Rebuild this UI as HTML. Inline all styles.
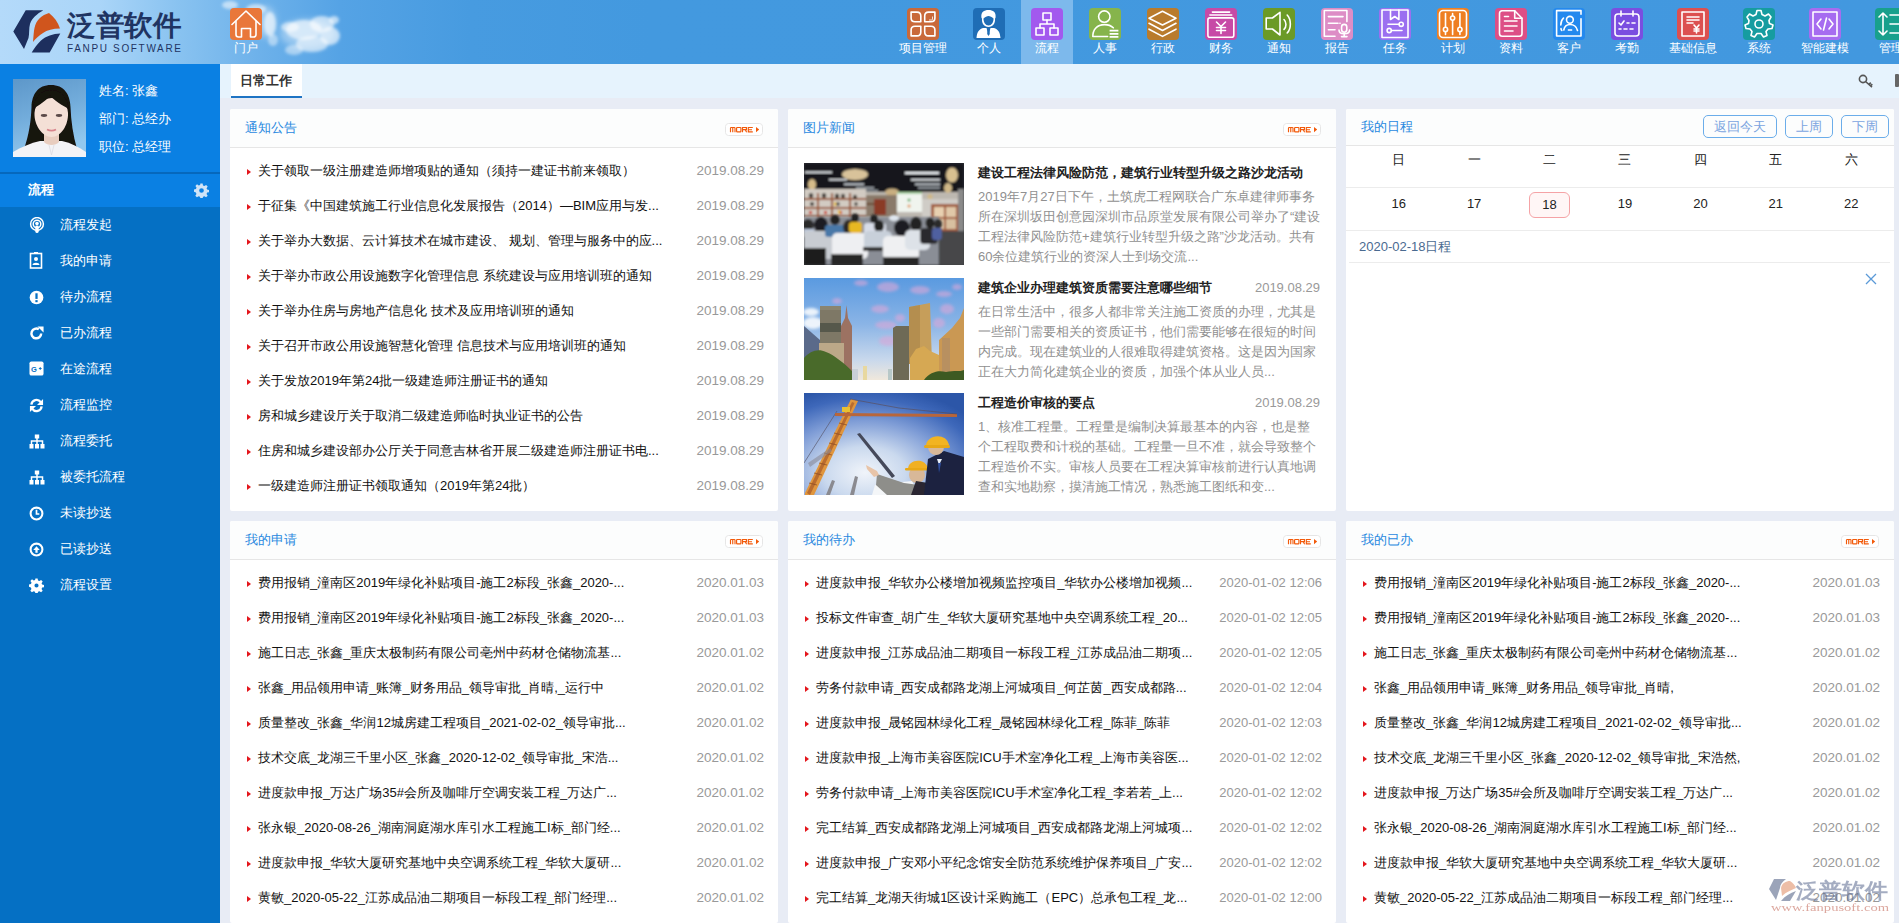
<!DOCTYPE html><html><head><meta charset="utf-8"><title>泛普软件</title><style>
*{box-sizing:border-box;margin:0;padding:0}
html,body{width:1899px;height:923px;overflow:hidden}
body{position:relative;background:#e8ecf5;font-family:"Liberation Sans",sans-serif;font-size:13px;color:#333}
.abs{position:absolute}
#hdr{left:0;top:0;width:1899px;height:64px;background:linear-gradient(90deg,#b4dafa 0,#aad5f8 100px,#88c2f0 180px,#6db1ea 260px,#55a3e5 340px,#479be0 470px,#4399df 650px,#4298df 1899px);overflow:hidden}
.nav{position:absolute;top:0;height:64px;text-align:center;color:#fff;font-size:12px}
.nav .ic{position:absolute;top:8px;width:32px;height:32px;border-radius:4px}
.nav .lb{position:absolute;top:41px;height:14px;line-height:14px;white-space:nowrap;left:0;right:0;text-align:center}
#side{left:0;top:64px;width:220px;height:859px;background:#0570c4}
#prof{left:0;top:0;width:220px;height:108px;background:#0a80e3}
#side .pt{position:absolute;left:99px;color:#fff;font-size:13px;line-height:16px;white-space:nowrap}
#divl{left:0;top:108px;width:220px;height:2px;background:#0668bc}
#lch{left:0;top:110px;width:220px;height:33px;background:#0a80e3;color:#fff;font-weight:bold;line-height:31px;padding-left:28px}
.mi{position:absolute;left:0;width:220px;height:36px;line-height:36px;color:#fff;padding-left:60px;white-space:nowrap}
.mi svg{position:absolute;left:29px;top:11px}
#tabbar{left:220px;top:64px;width:1679px;height:34px;background:#e6f3fd}
#tab{left:231px;top:64px;width:71px;height:34px;background:#fff;border-bottom:2px solid #1f74c4;color:#333;font-size:13px;font-weight:bold;line-height:33px;text-align:center;padding-right:2px}
.pan{position:absolute;background:#fff;border-radius:2px;overflow:hidden}
.ph{position:absolute;left:0;top:0;right:0;height:39px;border-bottom:1px solid #e6e6e6;background:#fcfdfd}
.ph .tt{position:absolute;left:15px;top:0;line-height:38px;color:#2a89e0;font-size:13px}
.more{position:absolute;top:14px;right:15px;width:38px;height:13px;border:1px solid #e8e8e8;border-radius:3px;background:#fff}
.more span{position:absolute;left:4px;top:1px;font-size:8px;line-height:9px;font-weight:bold;color:#f26a10;letter-spacing:0px;font-family:"Liberation Sans",sans-serif}
.more i{position:absolute;right:4px;top:3px;width:0;height:0;border-left:4px solid #f26a10;border-top:3px solid transparent;border-bottom:3px solid transparent}
.row{position:absolute;left:0;right:0;height:35px;line-height:35px;white-space:nowrap}
.row i{position:absolute;left:17px;top:15px;width:0;height:0;border-left:4px solid #e4151b;border-top:3px solid transparent;border-bottom:3px solid transparent}
.row .t{position:absolute;left:28px;top:-1px;color:#111}
.row .d{position:absolute;right:14px;top:-1px;color:#999;font-size:13.5px}
.ni{position:absolute;left:16px;width:516px;height:102px}
.ni .im{position:absolute;left:0;top:0;width:160px;height:102px;overflow:hidden}
.ni .nt{position:absolute;left:174px;top:1px;line-height:18px;font-weight:bold;color:#222;white-space:nowrap}
.ni .nd{position:absolute;right:0;top:1px;line-height:18px;color:#999}
.ni .nx{position:absolute;left:174px;top:24px;width:344px;line-height:20px;color:#909090;height:80px;overflow:hidden;word-break:break-all}
.btn{position:absolute;top:6px;height:23px;border:1px solid #6badea;border-radius:5px;color:#7aa4e0;line-height:21px;text-align:center;font-size:13px}
.wk{position:absolute;width:75.4px;text-align:center;color:#222}
</style></head><body>
<div id="hdr" class="abs">
<svg class="abs" style="left:200px;top:0" width="160" height="64" viewBox="0 0 160 64">
<defs><filter id="cb" x="-50%" y="-50%" width="200%" height="200%"><feGaussianBlur stdDeviation="1.6"/></filter><filter id="cb2" x="-50%" y="-50%" width="200%" height="200%"><feGaussianBlur stdDeviation="3"/></filter></defs>
<g filter="url(#cb2)" fill="#fff">
<ellipse cx="108" cy="34" rx="28" ry="15" opacity=".35"/>
<ellipse cx="66" cy="22" rx="10" ry="16" opacity=".35"/>
</g>
<g filter="url(#cb)" fill="#fff">
<ellipse cx="30" cy="5" rx="8" ry="4" opacity=".55"/>
<ellipse cx="56" cy="9" rx="10" ry="5" opacity=".55"/>
<ellipse cx="70" cy="24" rx="6" ry="12" opacity=".6"/>
<ellipse cx="73" cy="40" rx="5" ry="6" opacity=".45"/>
<ellipse cx="104" cy="30" rx="18" ry="10" opacity=".6"/>
<ellipse cx="122" cy="24" rx="12" ry="8" opacity=".6"/>
<ellipse cx="130" cy="36" rx="10" ry="9" opacity=".6"/>
<ellipse cx="112" cy="44" rx="16" ry="8" opacity=".55"/>
<ellipse cx="90" cy="27" rx="9" ry="5" opacity=".55"/>
<ellipse cx="94" cy="50" rx="9" ry="5" opacity=".45"/>
<ellipse cx="134" cy="20" rx="5" ry="4" opacity=".6"/>
</g></svg>
<svg class="abs" style="left:0;top:0" width="200" height="64" viewBox="0 0 200 64">
<path d="M25.7 10.3 L43.3 10.3 C37 14 32 18 30 24 C28.8 28 29.5 34 28.5 38 L24 49 L13.3 31.4 Z" fill="#1d2f5e"/>
<path d="M33 42 C33.5 36 33.8 31 34.5 28 C36 20 42 15 49 13 C54 17 58 22 60 28.5 C53 28.5 47 30 43 33 C39 35.5 35.5 38.5 33 42 Z" fill="#d0551d"/>
<path d="M31.7 52.5 C34 49 37.5 43.5 41 40.5 C46 36 53 33.8 60.3 33.5 L49.7 52.5 Z" fill="#1d2f5e"/>
<text x="67" y="35" font-family="Liberation Sans, sans-serif" font-size="28" font-weight="600" fill="#1f3462" textLength="114" lengthAdjust="spacingAndGlyphs">泛普软件</text>
<text x="67" y="51.5" font-family="Liberation Sans, sans-serif" font-size="10" fill="#1f3462" textLength="114" lengthAdjust="spacing">FANPU SOFTWARE</text>
</svg>
<div class="nav" style="left:220px;width:52px;"><div class="ic" style="left:10px;background:#e9773a"><svg width="32" height="32" viewBox="0 0 32 32"><path d="M2 16.5 L16 3 L30 16.5" stroke="#fff" stroke-width="1.6" fill="none" stroke-linecap="round" stroke-linejoin="round" stroke-width="2"/><path d="M6 13.5 V26.5 Q6 29 8.5 29 H11.5 V20.5 H20.5 V29 H23.5 Q26 29 26 26.5 V13.5" stroke="#fff" stroke-width="1.6" fill="none" stroke-linecap="round" stroke-linejoin="round" stroke-width="2"/></svg></div><div class="lb">门户</div></div>
<div class="nav" style="left:889px;width:68px;"><div class="ic" style="left:18px;background:#c9693a"><svg width="32" height="32" viewBox="0 0 32 32"><g stroke="#fff" stroke-width="1.6" fill="none" stroke-linecap="round" stroke-linejoin="round" stroke-width="1.9"><path d="M4.1 4.1 H10 Q13.8 4.1 13.8 8 V13.8 H8 Q4.1 13.8 4.1 10 Z"/><path d="M17.7 13.8 V8 Q17.7 4.1 21.5 4.1 H27.9 V10 Q27.9 13.8 24 13.8 Z"/><path d="M4.1 27.9 V22 Q4.1 18.2 8 18.2 H13.8 V24 Q13.8 27.9 10 27.9 Z"/><path d="M17.7 18.2 H24 Q27.9 18.2 27.9 22 V27.9 H21.5 Q17.7 27.9 17.7 24 Z"/></g><path d="M25.5 8.5 V11 Q25.5 12 24.5 12 H22" stroke="#fff" stroke-width=".8" fill="none"/></svg></div><div class="lb">项目管理</div></div>
<div class="nav" style="left:963px;width:52px;"><div class="ic" style="left:10px;background:#1f6db5"><svg width="32" height="32" viewBox="0 0 32 32"><path d="M8.5 10 C7.5 4 11 2 15.5 2 C20 2 23.5 4 22.5 10 L22 10.5 C22.5 15 20 19 15.5 19 C11 19 8.5 15 9 10.5 Z" fill="#fff"/><path d="M10.5 10.5 C12 9 14 8 15.5 8 C17 8 19 9 20.5 10.5 C20.5 14.5 18.5 17.5 15.5 17.5 C12.5 17.5 10.5 14.5 10.5 10.5 Z" fill="#1f6db5"/><path d="M3.5 30 C4 24 6 21.5 10 20 L13.5 20 L15.5 27 L17.5 20 L21 20 C25 21.5 27 24 27.5 30 Z" fill="#fff"/><path d="M14.6 21 L16.4 21 L16.8 26 L15.5 28 L14.2 26 Z" fill="#1f6db5"/></svg></div><div class="lb">个人</div></div>
<div class="nav" style="left:1021px;width:52px;background:#7db9ec;"><div class="ic" style="left:10px;background:#a259ee"><svg width="32" height="32" viewBox="0 0 32 32"><rect x="12" y="5" width="8" height="7" stroke="#fff" stroke-width="1.6" fill="none" stroke-linecap="round" stroke-linejoin="round"/><path d="M16 12 V16 M9 16 H23 M9 16 V20 M23 16 V20" stroke="#fff" stroke-width="1.6" fill="none" stroke-linecap="round" stroke-linejoin="round"/><rect x="5" y="20" width="8" height="7" stroke="#fff" stroke-width="1.6" fill="none" stroke-linecap="round" stroke-linejoin="round"/><rect x="19" y="20" width="8" height="7" stroke="#fff" stroke-width="1.6" fill="none" stroke-linecap="round" stroke-linejoin="round"/></svg></div><div class="lb">流程</div></div>
<div class="nav" style="left:1079px;width:52px;"><div class="ic" style="left:10px;background:#86b44c"><svg width="32" height="32" viewBox="0 0 32 32"><circle cx="15.3" cy="8.6" r="5.7" stroke="#fff" stroke-width="1.6" fill="none" stroke-linecap="round" stroke-linejoin="round" stroke-width="2"/><path d="M24.3 19.8 C22 17.5 19 16.6 15.5 16.6 C8 16.6 3.8 21.5 3.8 28.5 H18.6" stroke="#fff" stroke-width="1.6" fill="none" stroke-linecap="round" stroke-linejoin="round" stroke-width="2" stroke-linecap="butt"/><path d="M20.6 22.7 H29.4 M20.6 25.8 H29.4 M20.6 28.9 H29.4" stroke="#fff" stroke-width="1.7" fill="none"/></svg></div><div class="lb">人事</div></div>
<div class="nav" style="left:1137px;width:52px;"><div class="ic" style="left:10px;background:#b97b2c"><svg width="32" height="32" viewBox="0 0 32 32"><path d="M15.5 3.3 L29 10.2 L15.5 17 L2 10.2 Z" stroke="#fff" stroke-width="1.6" fill="none" stroke-linecap="round" stroke-linejoin="round" stroke-width="1.5"/><path d="M2 15.3 L15.5 22.5 L29 15.3" stroke="#fff" stroke-width="1.6" fill="none" stroke-linecap="round" stroke-linejoin="round" stroke-width="1.5"/><path d="M2 21.2 L15.5 28.4 L29 21.2" stroke="#fff" stroke-width="1.6" fill="none" stroke-linecap="round" stroke-linejoin="round" stroke-width="1.5"/></svg></div><div class="lb">行政</div></div>
<div class="nav" style="left:1195px;width:52px;"><div class="ic" style="left:10px;background:#c74aa6"><svg width="32" height="32" viewBox="0 0 32 32"><path d="M7.4 4.1 H24.6 M4.9 7 H26.7" stroke="#fff" stroke-width="1.6" fill="none" stroke-linecap="round" stroke-linejoin="round" stroke-width="1.7" stroke-linecap="butt"/><rect x="2.9" y="9.9" width="25.9" height="19.3" rx="2" stroke="#fff" stroke-width="1.6" fill="none" stroke-linecap="round" stroke-linejoin="round" stroke-width="1.8"/><path d="M11.5 14 L16 18.5 L20.5 14 M16 18.5 V25.5 M11.5 19.5 H20.5 M11.5 22.5 H20.5" stroke="#fff" stroke-width="1.6" fill="none" stroke-linecap="round" stroke-linejoin="round" stroke-width="1.6"/></svg></div><div class="lb">财务</div></div>
<div class="nav" style="left:1253px;width:52px;"><div class="ic" style="left:10px;background:#6b9a26"><svg width="32" height="32" viewBox="0 0 32 32"><path d="M3.2 10 H9.4 L17 4.3 V27 L9.4 21 H3.2 Z" stroke="#fff" stroke-width="1.6" fill="none" stroke-linecap="round" stroke-linejoin="round" stroke-width="1.6"/><path d="M21 11.5 C23.6 14 23.6 19 21 21.4 M24.2 7 C28.4 11.5 28.4 20.5 24.2 25" stroke="#fff" stroke-width="1.6" fill="none" stroke-linecap="round" stroke-linejoin="round" stroke-width="1.6"/></svg></div><div class="lb">通知</div></div>
<div class="nav" style="left:1311px;width:52px;"><div class="ic" style="left:10px;background:#dd8dc6"><svg width="32" height="32" viewBox="0 0 32 32"><path d="M14 28.3 H3.3 V2.5 H25.9 V13.6" stroke="#fff" stroke-width="1.6" fill="none" stroke-linecap="round" stroke-linejoin="round" stroke-width="1.9" stroke-linecap="butt"/><path d="M7.4 8.6 H22 M7.4 15.2 H17 M7.4 21.8 H14" stroke="#fff" stroke-width="1.6" fill="none" stroke-linecap="round" stroke-linejoin="round" stroke-width="1.6" stroke-linecap="butt"/><path d="M18 15.2 H20" stroke="#fff" stroke-width="1" /><rect x="20.6" y="16.4" width="5.2" height="7.8" rx="2.6" stroke="#fff" stroke-width="1.6" fill="none" stroke-linecap="round" stroke-linejoin="round" stroke-width="1.5"/><path d="M18 22 C18 27 28.6 27 28.6 22 M23.2 26 V28.6 M20.5 28.6 H26" stroke="#fff" stroke-width="1.6" fill="none" stroke-linecap="round" stroke-linejoin="round" stroke-width="1.5"/></svg></div><div class="lb">报告</div></div>
<div class="nav" style="left:1369px;width:52px;"><div class="ic" style="left:10px;background:#9b6ff0"><svg width="32" height="32" viewBox="0 0 32 32"><rect x="3" y="2" width="26" height="27.5" stroke="#fff" stroke-width="1.6" fill="none" stroke-linecap="round" stroke-linejoin="round" stroke-width="1.9"/><path d="M11.5 2 V11.5 L15.7 8.5 L19.9 11.5 V2" stroke="#fff" stroke-width="1.6" fill="none" stroke-linecap="round" stroke-linejoin="round" stroke-width="1.6"/><path d="M9 16.3 H20 M12.5 22.5 H23" stroke="#fff" stroke-width="1.6" fill="none" stroke-linecap="round" stroke-linejoin="round" stroke-width="1.5"/><circle cx="22.2" cy="16.3" r="2.1" stroke="#fff" stroke-width="1.6" fill="none" stroke-linecap="round" stroke-linejoin="round" stroke-width="1.5"/><circle cx="10.2" cy="22.5" r="2.1" stroke="#fff" stroke-width="1.6" fill="none" stroke-linecap="round" stroke-linejoin="round" stroke-width="1.5"/></svg></div><div class="lb">任务</div></div>
<div class="nav" style="left:1427px;width:52px;"><div class="ic" style="left:10px;background:#ee7f22"><svg width="32" height="32" viewBox="0 0 32 32"><rect x="2.5" y="2.5" width="27" height="27" rx="3.5" stroke="#fff" stroke-width="1.6" fill="none" stroke-linecap="round" stroke-linejoin="round" stroke-width="1.8"/><path d="M8.5 5.6 V26.5 M15.6 5.6 V26.5 M22.9 5.6 V26.5" stroke="#fff" stroke-width="1.6" fill="none" stroke-linecap="round" stroke-linejoin="round" stroke-width="1.5"/><circle cx="8.5" cy="21.4" r="2.1" fill="#ef7e22" stroke="#fff" stroke-width="1.6" fill="none" stroke-linecap="round" stroke-linejoin="round" stroke-width="1.5"/><circle cx="15.6" cy="10.1" r="2.1" fill="#ef7e22" stroke="#fff" stroke-width="1.6" fill="none" stroke-linecap="round" stroke-linejoin="round" stroke-width="1.5"/><circle cx="22.9" cy="21.4" r="2.1" fill="#ef7e22" stroke="#fff" stroke-width="1.6" fill="none" stroke-linecap="round" stroke-linejoin="round" stroke-width="1.5"/></svg></div><div class="lb">计划</div></div>
<div class="nav" style="left:1485px;width:52px;"><div class="ic" style="left:10px;background:#dd4f86"><svg width="32" height="32" viewBox="0 0 32 32"><path d="M6.5 2.8 H19.7 L27 10.2 V25.5 Q27 28.2 24.3 28.2 H7.2 Q4.5 28.2 4.5 25.5 V5.5 Q4.5 2.8 7.2 2.8" stroke="#fff" stroke-width="1.6" fill="none" stroke-linecap="round" stroke-linejoin="round" stroke-width="1.8"/><path d="M19.7 2.8 V10.2 H27" stroke="#fff" stroke-width="1.6" fill="none" stroke-linecap="round" stroke-linejoin="round" stroke-width="1.5"/><path d="M9.5 8.5 H13.5 M9.5 13 H22 M9.5 18 H22 M9.5 23 H18" stroke="#fff" stroke-width="1.6" fill="none" stroke-linecap="round" stroke-linejoin="round" stroke-width="1.5" stroke-linecap="butt"/></svg></div><div class="lb">资料</div></div>
<div class="nav" style="left:1543px;width:52px;"><div class="ic" style="left:10px;background:#2489ee"><svg width="32" height="32" viewBox="0 0 32 32"><path d="M28 6.2 V2.6 H3.6 V28 H28 V10.7" stroke="#fff" stroke-width="1.6" fill="none" stroke-linecap="round" stroke-linejoin="round" stroke-width="1.8" stroke-linecap="butt"/><circle cx="16.9" cy="11.8" r="3.4" stroke="#fff" stroke-width="1.6" fill="none" stroke-linecap="round" stroke-linejoin="round" stroke-width="1.5"/><path d="M10.8 22 C11.5 18 14 16.5 17 16.5 C20.5 16.5 23.5 18.5 24.5 22.5 M10.5 10 C8.5 12 7.8 14.5 7.8 17 M8 20.5 C8 21.5 8.3 22 8.8 22.5" stroke="#fff" stroke-width="1.6" fill="none" stroke-linecap="round" stroke-linejoin="round" stroke-width="1.5"/><path d="M14.8 22 H19.2" stroke="#fff" stroke-width="1.5"/></svg></div><div class="lb">客户</div></div>
<div class="nav" style="left:1601px;width:52px;"><div class="ic" style="left:10px;background:#7a4ee0"><svg width="32" height="32" viewBox="0 0 32 32"><rect x="4" y="6" width="24" height="22" rx="3" stroke="#fff" stroke-width="1.6" fill="none" stroke-linecap="round" stroke-linejoin="round" stroke-width="1.8"/><path d="M10 3 V8 M22 3 V8" stroke="#fff" stroke-width="1.6" fill="none" stroke-linecap="round" stroke-linejoin="round"/><path d="M8 15 L10 17 L13 13 M16 15 H18 M21 15 H24 M8 21 H10 M13 21 H16 M19 21 H22" stroke="#fff" stroke-width="1.6" fill="none" stroke-linecap="round" stroke-linejoin="round"/></svg></div><div class="lb">考勤</div></div>
<div class="nav" style="left:1659px;width:68px;"><div class="ic" style="left:18px;background:#dc5050"><svg width="32" height="32" viewBox="0 0 32 32"><rect x="5" y="4" width="22" height="24" stroke="#fff" stroke-width="1.6" fill="none" stroke-linecap="round" stroke-linejoin="round" stroke-width="1.8"/><path d="M10 9 H22 M10 12 H22 M10 15 H16" stroke="#fff" stroke-width="1.6" fill="none" stroke-linecap="round" stroke-linejoin="round"/><path d="M17 17 L19.5 20 L22 17 M19.5 20 V25 M17 21 H22 M17 23 H22" stroke="#fff" stroke-width="1.6" fill="none" stroke-linecap="round" stroke-linejoin="round"/></svg></div><div class="lb">基础信息</div></div>
<div class="nav" style="left:1733px;width:52px;"><div class="ic" style="left:10px;background:#169ca0"><svg width="32" height="32" viewBox="0 0 32 32"><path d="M14 4 H18 L19 8 L22 9.5 L25.5 7.5 L28 10.5 L26 14 L26.5 17 L30 18.5 L29 22 L25 22.5 L23 25 L24 29 L20.5 30.5 L18 27 H14 L11.5 30.5 L8 29 L9 25 L7 22.5 L3 22 L2 18.5 L5.5 17 L6 14 L4 10.5 L6.5 7.5 L10 9.5 L13 8 Z" stroke="#fff" stroke-width="1.6" fill="none" stroke-linecap="round" stroke-linejoin="round" stroke-width="1.8" transform="translate(0,-1.5)"/><circle cx="16" cy="16" r="4" stroke="#fff" stroke-width="1.6" fill="none" stroke-linecap="round" stroke-linejoin="round" stroke-width="1.8"/></svg></div><div class="lb">系统</div></div>
<div class="nav" style="left:1791px;width:68px;"><div class="ic" style="left:18px;background:#a66cf0"><svg width="32" height="32" viewBox="0 0 32 32"><rect x="4" y="4" width="24" height="24" stroke="#fff" stroke-width="1.6" fill="none" stroke-linecap="round" stroke-linejoin="round" stroke-width="1.8"/><path d="M12 11 L8 16 L12 21 M20 11 L24 16 L20 21 M17.5 10 L14.5 22" stroke="#fff" stroke-width="1.6" fill="none" stroke-linecap="round" stroke-linejoin="round"/></svg></div><div class="lb">智能建模</div></div>
<div class="nav" style="left:1865px;width:52px;"><div class="ic" style="left:10px;background:#18a08c"><svg width="32" height="32" viewBox="0 0 32 32"><path d="M8 5 V27 M4 9 L8 5 L12 9 M4 23 L8 27 L12 23 M15 7 H29 M15 16 H29 M15 25 H29" stroke="#fff" stroke-width="1.6" fill="none" stroke-linecap="round" stroke-linejoin="round" stroke-width="2.2"/></svg></div><div class="lb">管理</div></div>
</div>
<div id="side" class="abs">
<div id="prof" class="abs">
<svg class="abs" style="left:13px;top:15px" width="73" height="78" viewBox="0 0 73 78">
<defs><linearGradient id="pbg" x1="0" y1="0" x2="0.3" y2="1"><stop offset="0" stop-color="#5d97c9"/><stop offset=".5" stop-color="#72acdb"/><stop offset="1" stop-color="#92c8ee"/></linearGradient>
<filter id="pbl" x="-10%" y="-10%" width="120%" height="120%"><feGaussianBlur stdDeviation=".7"/></filter></defs>
<rect width="73" height="78" fill="url(#pbg)"/>
<g filter="url(#pbl)">
<path d="M38 6 C25 6 19 15 18.5 28 C18 42 16 56 11 70 L28 67 L48 67 L64 70 C60 56 58 42 57.5 28 C57 15 51 6 38 6 Z" fill="#17120f"/>
<path d="M0 78 V73 C8 68 18 64 27 62 L49 62 C58 64 66 68 73 73 V78 Z" fill="#f3f3f6"/>
<path d="M31 52 V63 C34 67 43 67 46 63 V52 Z" fill="#e8cdbf"/>
<path d="M38.5 19 C30 20 22 24 21.5 34 C21 46 29 58 38.5 58 C48 58 55.5 46 55 34 C54.5 24 47 20 38.5 19 Z" fill="#f4e0d6"/>
<path d="M38 11 C29 11 22 17 20 30 C26 26 33 22 37.5 16 C41 22 49 26 56 30 C54 17 47 11 38 11 Z" fill="#17120f"/>
<ellipse cx="31" cy="36.5" rx="3.2" ry="1.4" fill="#5a4a48"/><ellipse cx="46" cy="36.5" rx="3.2" ry="1.4" fill="#5a4a48"/>
<path d="M34 50.5 C37 52 40 52 43 50.5" stroke="#d8848c" stroke-width="1.8" fill="none"/>
<path d="M36 66 L38.5 76 L41 66" stroke="#dcdce2" stroke-width=".8" fill="none"/>
</g></svg>
<div class="pt" style="top:19px">姓名: 张鑫</div>
<div class="pt" style="top:47px">部门: 总经办</div>
<div class="pt" style="top:75px">职位: 总经理</div>
</div>
<div id="divl" class="abs"></div>
<div id="lch" class="abs">流程<svg class="abs" style="left:194px;top:9px" width="15" height="15" viewBox="0 0 16 16"><path fill="#cfe3f7" d="M6.8 0.5h2.4l.4 2.1 1.5.6 1.8-1.2 1.7 1.7-1.2 1.8.6 1.5 2.1.4v2.4l-2.1.4-.6 1.5 1.2 1.8-1.7 1.7-1.8-1.2-1.5.6-.4 2.1H6.8l-.4-2.1-1.5-.6-1.8 1.2-1.7-1.7 1.2-1.8-.6-1.5L0 9.2V6.8l2.1-.4.6-1.5-1.2-1.8 1.7-1.7 1.8 1.2 1.5-.6z M8 5.5a2.5 2.5 0 1 0 0 5 2.5 2.5 0 1 0 0-5z" fill-rule="evenodd"/></svg></div>
<div class="mi" style="top:143px"><svg width="16" height="16" viewBox="0 0 16 16" style="top:10px;left:29px"><circle cx="8" cy="7" r="6.4" fill="none" stroke="#fff" stroke-width="1.5"/><circle cx="8" cy="7" r="3.8" fill="none" stroke="#fff" stroke-width="1.5"/><circle cx="8" cy="6.5" r="1.8" fill="#fff"/><rect x="6.3" y="8.5" width="3.4" height="7.5" rx="1.4" fill="#fff"/></svg>流程发起</div>
<div class="mi" style="top:179px"><svg width="14" height="17" viewBox="0 0 14 17" style="top:9px"><rect x="1.5" y="1.5" width="11" height="14.5" fill="none" stroke="#fff" stroke-width="1.6"/><circle cx="7" cy="7" r="2" fill="#fff"/><path d="M3.5 13 C3.5 10 10.5 10 10.5 13 Z" fill="#fff"/><rect x="5" y="0" width="4" height="2" fill="#fff"/></svg>我的申请</div>
<div class="mi" style="top:215px"><svg width="15" height="15" viewBox="0 0 16 16"><circle cx="8" cy="8" r="7.3" fill="#fff"/><rect x="6.8" y="3.5" width="2.4" height="6" fill="#0570c4"/><rect x="6.8" y="10.8" width="2.4" height="2.2" fill="#0570c4"/></svg>待办流程</div>
<div class="mi" style="top:251px"><svg width="15" height="15" viewBox="0 0 16 16"><path d="M13 8 A5.2 5.2 0 1 1 10.5 3.5" fill="none" stroke="#fff" stroke-width="2.6"/><path d="M9 0.5 L15.5 0.5 L15.5 7 Z" fill="#fff"/></svg>已办流程</div>
<div class="mi" style="top:287px"><svg width="15" height="15" viewBox="0 0 16 16" style="top:10px"><rect x="0.5" y="0.5" width="15" height="15" rx="2" fill="#fff"/><text x="2.2" y="11.5" font-size="8" font-weight="bold" font-family="Liberation Sans, sans-serif" fill="#0570c4">G</text><path d="M10.5 8 h3 M12 6.5 v3" stroke="#0570c4" stroke-width="1"/></svg>在途流程</div>
<div class="mi" style="top:323px"><svg width="15" height="15" viewBox="0 0 16 16"><path d="M2.5 7 A5.5 5.5 0 0 1 12.5 4.5" fill="none" stroke="#fff" stroke-width="2.4"/><path d="M15 1 V7.5 H8.5 Z" fill="#fff"/><path d="M13.5 9 A5.5 5.5 0 0 1 3.5 11.5" fill="none" stroke="#fff" stroke-width="2.4"/><path d="M1 15 V8.5 H7.5 Z" fill="#fff"/></svg>流程监控</div>
<div class="mi" style="top:359px"><svg width="16" height="15" viewBox="0 0 16 15"><rect x="5.8" y="0.5" width="4.4" height="4" fill="#fff"/><path d="M8 4 V7 M2.5 10 V7 H13.5 V10 M8 7 V10" stroke="#fff" stroke-width="1.5" fill="none"/><rect x="0.5" y="10" width="4" height="4.5" fill="#fff"/><rect x="6" y="10" width="4" height="4.5" fill="#fff"/><rect x="11.5" y="10" width="4" height="4.5" fill="#fff"/></svg>流程委托</div>
<div class="mi" style="top:395px"><svg width="16" height="15" viewBox="0 0 16 15"><rect x="5.8" y="0.5" width="4.4" height="4" fill="#fff"/><path d="M8 4 V7 M2.5 10 V7 H13.5 V10 M8 7 V10" stroke="#fff" stroke-width="1.5" fill="none"/><rect x="0.5" y="10" width="4" height="4.5" fill="#fff"/><rect x="6" y="10" width="4" height="4.5" fill="#fff"/><rect x="11.5" y="10" width="4" height="4.5" fill="#fff"/></svg>被委托流程</div>
<div class="mi" style="top:431px"><svg width="15" height="15" viewBox="0 0 16 16"><circle cx="8" cy="8" r="6.3" fill="none" stroke="#fff" stroke-width="2.2"/><path d="M8 4 V8.5 H11" fill="none" stroke="#fff" stroke-width="1.8"/></svg>未读抄送</div>
<div class="mi" style="top:467px"><svg width="15" height="15" viewBox="0 0 16 16"><circle cx="8" cy="8" r="6.3" fill="none" stroke="#fff" stroke-width="2.2"/><path d="M4.5 8.5 L8 4.5 L11.5 8.5 Z" fill="#fff"/><rect x="6.8" y="7.5" width="2.4" height="4" fill="#fff"/></svg>已读抄送</div>
<div class="mi" style="top:503px"><svg width="15" height="15" viewBox="0 0 16 16"><path fill="#fff" fill-rule="evenodd" d="M6.8 0.5h2.4l.4 2.1 1.5.6 1.8-1.2 1.7 1.7-1.2 1.8.6 1.5 2.1.4v2.4l-2.1.4-.6 1.5 1.2 1.8-1.7 1.7-1.8-1.2-1.5.6-.4 2.1H6.8l-.4-2.1-1.5-.6-1.8 1.2-1.7-1.7 1.2-1.8-.6-1.5L0 9.2V6.8l2.1-.4.6-1.5-1.2-1.8 1.7-1.7 1.8 1.2 1.5-.6z M8 5.8a2.2 2.2 0 1 0 0 4.4 2.2 2.2 0 1 0 0-4.4z"/></svg>流程设置</div>
</div>
<div id="tabbar" class="abs"></div>
<div id="tab" class="abs">日常工作</div>
<svg class="abs" style="left:1858px;top:74px" width="16" height="14" viewBox="0 0 16 14"><circle cx="5" cy="5" r="3.6" fill="none" stroke="#555" stroke-width="1.6"/><path d="M7.5 7.5 L14 13.2 M11 10.3 L12.8 8.6 M12.6 11.8 L14.3 10.2" stroke="#555" stroke-width="1.6" fill="none"/></svg>
<div class="abs" style="left:1895px;top:74px;width:4px;height:13px;background:#666;border-radius:1px"></div>
<div class="pan" style="left:230px;top:109px;width:548px;height:402px">
<div class="ph"><div class="tt">通知公告</div><svg class="more" width="38" height="13" viewBox="0 0 38 13" style="border:none;background:none"><rect x="0.5" y="0.5" width="37" height="12" rx="3" fill="#fff" stroke="#e6e6e6"/><g transform="translate(5,4)" stroke="#f25a0a" stroke-width="1.15" fill="none"><path d="M0.5 5.2 V1.2 Q0.5 0.5 1.2 0.5 H4.3 Q5 0.5 5 1.2 V5.2 M2.75 0.5 V5.2"/><rect x="6.6" y="0.5" width="4.3" height="4.4" rx="0.6"/><path d="M12.5 5.2 V0.5 H16.4 V2.6 H12.5 M15.2 2.6 L16.6 5.2"/><path d="M22.8 0.5 H18.3 V4.9 H22.8 M18.3 2.7 H22"/></g><path d="M31 4 L34.2 6.6 L31 9.2 Z" fill="#f25a0a"/></svg></div>
<div class="row" style="top:45px"><i></i><span class="t">关于领取一级注册建造师增项贴的通知（须持一建证书前来领取）</span><span class="d">2019.08.29</span></div>
<div class="row" style="top:80px"><i></i><span class="t">于征集《中国建筑施工行业信息化发展报告（2014）—BIM应用与发...</span><span class="d">2019.08.29</span></div>
<div class="row" style="top:115px"><i></i><span class="t">关于举办大数据、云计算技术在城市建设、 规划、管理与服务中的应...</span><span class="d">2019.08.29</span></div>
<div class="row" style="top:150px"><i></i><span class="t">关于举办市政公用设施数字化管理信息 系统建设与应用培训班的通知</span><span class="d">2019.08.29</span></div>
<div class="row" style="top:185px"><i></i><span class="t">关于举办住房与房地产信息化 技术及应用培训班的通知</span><span class="d">2019.08.29</span></div>
<div class="row" style="top:220px"><i></i><span class="t">关于召开市政公用设施智慧化管理 信息技术与应用培训班的通知</span><span class="d">2019.08.29</span></div>
<div class="row" style="top:255px"><i></i><span class="t">关于发放2019年第24批一级建造师注册证书的通知</span><span class="d">2019.08.29</span></div>
<div class="row" style="top:290px"><i></i><span class="t">房和城乡建设厅关于取消二级建造师临时执业证书的公告</span><span class="d">2019.08.29</span></div>
<div class="row" style="top:325px"><i></i><span class="t">住房和城乡建设部办公厅关于同意吉林省开展二级建造师注册证书电...</span><span class="d">2019.08.29</span></div>
<div class="row" style="top:360px"><i></i><span class="t">一级建造师注册证书领取通知（2019年第24批）</span><span class="d">2019.08.29</span></div>
</div>
<div class="pan" style="left:788px;top:109px;width:548px;height:402px">
<div class="ph"><div class="tt">图片新闻</div><svg class="more" width="38" height="13" viewBox="0 0 38 13" style="border:none;background:none"><rect x="0.5" y="0.5" width="37" height="12" rx="3" fill="#fff" stroke="#e6e6e6"/><g transform="translate(5,4)" stroke="#f25a0a" stroke-width="1.15" fill="none"><path d="M0.5 5.2 V1.2 Q0.5 0.5 1.2 0.5 H4.3 Q5 0.5 5 1.2 V5.2 M2.75 0.5 V5.2"/><rect x="6.6" y="0.5" width="4.3" height="4.4" rx="0.6"/><path d="M12.5 5.2 V0.5 H16.4 V2.6 H12.5 M15.2 2.6 L16.6 5.2"/><path d="M22.8 0.5 H18.3 V4.9 H22.8 M18.3 2.7 H22"/></g><path d="M31 4 L34.2 6.6 L31 9.2 Z" fill="#f25a0a"/></svg></div>
<div class="ni" style="top:54px"><div class="im"><svg width="160" height="102" viewBox="0 0 160 102"><defs><filter id="b1" x="-5%" y="-5%" width="110%" height="110%"><feGaussianBlur stdDeviation=".9"/></filter></defs>
<rect width="160" height="102" fill="#3a3c40"/>
<g filter="url(#b1)">
<rect x="0" y="24" width="160" height="50" fill="#bdb8b0"/>
<rect x="0" y="0" width="160" height="29" fill="#15181e"/>
<rect x="1" y="8.5" width="27" height="1.6" fill="#f4f8fc"/><rect x="25" y="16" width="18" height="1.4" fill="#eef2f6"/><rect x="40" y="20.5" width="20" height="1.4" fill="#e8eef4"/><rect x="52" y="24.3" width="18" height="1.2" fill="#dde4ec"/><rect x="60" y="27.2" width="14" height="1" fill="#c8d0d8"/>
<rect x="101" y="9" width="34" height="2" fill="#f4f8fc"/><rect x="107" y="16" width="29" height="1.6" fill="#eef2f6"/><rect x="111" y="20.5" width="25" height="1.4" fill="#e4eaf0"/><rect x="114" y="24.3" width="22" height="1.2" fill="#d8dee6"/>
<ellipse cx="51" cy="11.5" rx="13" ry="5.5" fill="#d8c29a"/><ellipse cx="8" cy="21.5" rx="4" ry="5.5" fill="#d6bc8a"/><ellipse cx="148" cy="12" rx="6" ry="7.5" fill="#d8c090"/><ellipse cx="144" cy="25" rx="4" ry="5" fill="#d0b888"/><ellipse cx="88" cy="29" rx="7" ry="3.5" fill="#c8ae80"/>
<ellipse cx="42" cy="31" rx="3" ry="4" fill="#d8c090"/><ellipse cx="62" cy="36" rx="2.2" ry="3" fill="#d8c090"/><ellipse cx="126" cy="34" rx="2.5" ry="3" fill="#d0b888"/>
<rect x="0" y="26" width="62" height="30" fill="#d2cbc2"/>
<rect x="0" y="35" width="62" height="2" fill="#9a5632"/><rect x="0" y="44" width="62" height="2" fill="#9a5632"/><rect x="0" y="52" width="62" height="2" fill="#8a4a2c"/>
<rect x="13" y="30" width="2" height="26" fill="#9a5632"/><rect x="27" y="30" width="2" height="26" fill="#9a5632"/><rect x="45" y="30" width="2" height="26" fill="#9a5632"/>
<g fill="#3a3630"><ellipse cx="7" cy="32.5" rx="2.2" ry="2.5"/><ellipse cx="20" cy="32.5" rx="2.2" ry="2.5"/><ellipse cx="33" cy="33" rx="2.2" ry="2.5"/><ellipse cx="39" cy="33" rx="2" ry="2.3"/><ellipse cx="51" cy="34" rx="2" ry="2.2"/><ellipse cx="8" cy="41" rx="2" ry="2"/><ellipse cx="34" cy="41" rx="1.6" ry="2"/><ellipse cx="52" cy="41" rx="1.6" ry="2"/></g>
<g fill="#c83a28"><rect x="5" y="48" width="3" height="3"/><rect x="20" y="48" width="3" height="3"/><rect x="36" y="48" width="2" height="3"/></g>
<g fill="#e8c030"><rect x="30" y="39" width="2" height="4"/><rect x="34" y="47" width="2" height="4"/></g>
<rect x="62" y="32" width="31" height="22" fill="#8a7a6a"/><rect x="70" y="36" width="12" height="16" fill="#8a3a28"/><rect x="62" y="40" width="8" height="2" fill="#6a4a30"/>
<rect x="93" y="29" width="25" height="20" fill="#f0f4ee"/><rect x="93" y="29" width="25" height="2" fill="#a8d0a0"/><circle cx="105" cy="37" r="1.5" fill="#5aa860"/><circle cx="105" cy="43" r="1.5" fill="#e09050"/>
<rect x="118" y="36" width="37" height="34" fill="#cfccc6"/>
<rect x="127" y="41" width="28" height="28" fill="#a05a3a"/><rect x="130" y="44" width="10" height="10" fill="#e8d0b0"/><rect x="142" y="44" width="10" height="10" fill="#e0c8a8"/><rect x="130" y="56" width="10" height="10" fill="#e0c8a8"/><rect x="142" y="56" width="10" height="10" fill="#d8c0a0"/>
<rect x="154" y="26" width="6" height="50" fill="#8a8a8a"/>
<rect x="135" y="68" width="25" height="34" fill="#46464a"/>
</g>
<g filter="url(#b1)">
<rect x="0" y="54" width="135" height="48" fill="#8a8e96"/>
<ellipse cx="4" cy="62" rx="6" ry="6" fill="#2a2a2a"/><rect x="0" y="66" width="10" height="10" fill="#bcc8dc"/>
<ellipse cx="17" cy="62" rx="7" ry="8" fill="#1e1e20"/><rect x="0" y="68" width="30" height="28" rx="4" fill="#c8ccd2"/>
<ellipse cx="31" cy="57" rx="5" ry="5" fill="#222"/><rect x="21" y="62" width="21" height="12" rx="3" fill="#4a78a8"/>
<ellipse cx="45" cy="64" rx="6" ry="7.5" fill="#2e2a26"/><rect x="28" y="70" width="36" height="26" rx="5" fill="#eeeff2"/>
<ellipse cx="51" cy="55" rx="4" ry="4.5" fill="#222"/><rect x="45" y="59" width="13" height="11" rx="3" fill="#e8b820"/>
<ellipse cx="70" cy="56" rx="4" ry="4.5" fill="#222"/><rect x="60" y="60" width="22" height="12" rx="3" fill="#d8dde8"/>
<ellipse cx="75" cy="63" rx="5" ry="6" fill="#222"/><rect x="60" y="68" width="28" height="20" rx="5" fill="#c8d0da"/>
<ellipse cx="98" cy="65" rx="8" ry="8.5" fill="#1e1e20"/><rect x="79" y="73" width="36" height="24" rx="5" fill="#eff0f2"/>
<ellipse cx="90" cy="55" rx="5" ry="3" fill="#dfe6ee"/>
<ellipse cx="112" cy="61" rx="6" ry="7" fill="#222"/><rect x="101" y="67" width="25" height="20" rx="5" fill="#dde2e8"/>
<ellipse cx="126" cy="60" rx="4.5" ry="5.5" fill="#222"/><rect x="116" y="65" width="18" height="16" rx="4" fill="#2a2a2e"/>
<ellipse cx="134" cy="61" rx="4" ry="5" fill="#2a2a2a"/><rect x="128" y="65" width="10" height="12" rx="3" fill="#5060a0"/>
<rect x="0" y="85" width="22" height="17" fill="#1e1e1e"/><rect x="27" y="91" width="32" height="11" fill="#262626"/><rect x="79" y="94" width="36" height="8" fill="#262626"/>
<rect x="59" y="84" width="20" height="4" fill="#2a2a2a"/>
</g></svg></div><div class="nt">建设工程法律风险防范，建筑行业转型升级之路沙龙活动</div><div class="nx">2019年7月27日下午，土筑虎工程网联合广东卓建律师事务所在深圳坂田创意园深圳市品原堂发展有限公司举办了“建设工程法律风险防范+建筑行业转型升级之路”沙龙活动。共有60余位建筑行业的资深人士到场交流...</div></div>
<div class="ni" style="top:169px"><div class="im"><svg width="160" height="102" viewBox="0 0 160 102"><defs><linearGradient id="sk" x1="0" y1="0" x2="0" y2="1"><stop offset="0" stop-color="#5a9ae0"/><stop offset=".45" stop-color="#8ab4e6"/><stop offset=".8" stop-color="#c8d8ec"/><stop offset="1" stop-color="#f0e8dc"/></linearGradient><filter id="b2" x="-5%" y="-5%" width="110%" height="110%"><feGaussianBlur stdDeviation=".7"/></filter><filter id="b2c" x="-50%" y="-50%" width="200%" height="200%"><feGaussianBlur stdDeviation="1.8"/></filter></defs>
<rect width="160" height="102" fill="url(#sk)"/>
<g filter="url(#b2c)" fill="#dca8d8" opacity=".6"><ellipse cx="84" cy="9" rx="11" ry="5"/><ellipse cx="57" cy="5" rx="7" ry="3"/><ellipse cx="76" cy="31" rx="9" ry="4"/><ellipse cx="140" cy="16" rx="8" ry="3"/><ellipse cx="116" cy="12" rx="10" ry="4"/><ellipse cx="82" cy="47" rx="11" ry="4"/><ellipse cx="153" cy="9" rx="5" ry="3"/><ellipse cx="143" cy="31" rx="7" ry="5"/><ellipse cx="135" cy="45" rx="6" ry="5"/><ellipse cx="84" cy="63" rx="9" ry="5"/><ellipse cx="33" cy="23" rx="5" ry="3"/><ellipse cx="96" cy="40" rx="5" ry="4"/></g>
<g filter="url(#b2c)" fill="#fff" opacity=".85"><ellipse cx="7" cy="34" rx="8" ry="4"/><ellipse cx="9" cy="45" rx="10" ry="6"/></g>
<g filter="url(#b2)">
<rect x="16" y="28" width="21" height="50" rx="2" fill="#7e7866"/><rect x="16" y="45" width="21" height="9" fill="#56594c"/><rect x="16" y="28" width="21" height="4" fill="#8a8470"/>
<path d="M37 102 V48 L41 40 L42.5 27 L44 40 L48 48 V102 Z" fill="#9c7262"/>
<path d="M0 48 L8 55 L16 62 V102 H0 Z" fill="#5a6a8a"/>
<rect x="15" y="65" width="25" height="37" fill="#bca888"/>
<path d="M89 50 L92 48 H105 V102 H89 Z" fill="#6e6a56"/>
<path d="M105 29 L126 25 L128 86 H105 Z" fill="#c69e5a"/><path d="M105 29 L116 27 V86 H105 Z" fill="#a88448" opacity=".6"/>
<path d="M106 80 L112 71 L120 68 L126 73 L135 77 V102 H106 Z" fill="#d6a852"/>
<path d="M135 62 L148 50 L156 40 L160 30 V102 H135 Z" fill="#ca9852"/><rect x="138" y="60" width="8" height="42" fill="#b89060"/>
<rect x="59" y="88" width="4" height="14" fill="#e8d8a0"/><rect x="48" y="91" width="6" height="11" fill="#c8d0d8"/><rect x="84" y="91" width="4" height="11" fill="#b8c8c8"/>
<path d="M0 102 V80 C6 73 14 70 22 74 C30 77 40 85 48 93 V102 Z" fill="#4a6a2c"/>
<path d="M120 102 C126 94 134 92 142 94 C150 92 156 94 160 92 V102 Z" fill="#3e5a24"/>
</g></svg></div><div class="nt">建筑企业办理建筑资质需要注意哪些细节</div><div class="nd">2019.08.29</div><div class="nx">在日常生活中，很多人都非常关注施工资质的办理，尤其是一些部门需要相关的资质证书，他们需要能够在很短的时间内完成。现在建筑业的人很难取得建筑资格。这是因为国家正在大力简化建筑企业的资质，加强个体从业人员...</div></div>
<div class="ni" style="top:284px"><div class="im"><svg width="160" height="102" viewBox="0 0 160 102"><defs><radialGradient id="sk3" cx=".38" cy=".78" r=".85"><stop offset="0" stop-color="#f0f4fa"/><stop offset=".3" stop-color="#cad9ee"/><stop offset=".6" stop-color="#7e9cd6"/><stop offset=".85" stop-color="#3e68ba"/><stop offset="1" stop-color="#2c56a8"/></radialGradient><filter id="b3"><feGaussianBlur stdDeviation=".6"/></filter></defs>
<rect width="160" height="102" fill="url(#sk3)"/>
<g filter="url(#b3)">
<path d="M1 100 L47 6 L54 8 L10 102 H1 Z" fill="#e0963e"/><path d="M3 100 L48 9 L50.5 10 L6 102 Z" fill="#a85a28" opacity=".7"/><g stroke="#8a4a24" stroke-width=".9" opacity=".8"><path d="M5 90 L13 92 M10 80 L18 82 M15 70 L23 72 M20 60 L28 62 M25 50 L33 52 M30 40 L38 42 M35 30 L43 32 M40 20 L48 22"/></g><path d="M0 70 L33 18" stroke="#5a5a70" stroke-width="1" opacity=".7"/>
<path d="M31 20 L153 21 L153 24 L31 23 Z" fill="#b8663a"/>
<path d="M46 6 L95 15 L153 21" stroke="#5a4a50" stroke-width=".6" fill="none"/>
<rect x="38" y="14" width="8" height="5" fill="#e8c030"/>
<path d="M53 41 L56 40 L91 83 L88 85 Z" fill="#44485a"/>
<path d="M4 70 L26 55 L28 58 L6 74 Z" fill="#8a8a98" opacity=".6"/>
<path d="M22 102 L28 87 L31 88 L26 102 Z" fill="#8a8a90"/><path d="M46 102 L51 83 L54 84 L50 102 Z" fill="#8a8a90"/>
<path d="M68 102 L71 92 L108 88 L116 102 Z" fill="#f4f6f8"/>
<path d="M73 81 L100 90 L115 92 L118 102 H83 L72 92 Z" fill="#8e8e8a"/>
<path d="M62 72 L73 78 L75 82 L70 84 L63 76 Z" fill="#e8c4a8"/>
<ellipse cx="113" cy="82" rx="8" ry="8" fill="#d8b898"/>
<path d="M104 76 C104 66 122 64 124 76 Z" fill="#f0b020"/><rect x="101" y="75" width="24" height="2.5" rx="1" fill="#e8a818"/>
<path d="M112 88 L107 102 H127 L124 90 Z" fill="#2a2830"/>
<path d="M120 102 L124 66 L140 58 L160 64 V102 Z" fill="#1a2240"/>
<ellipse cx="132" cy="54" rx="8" ry="8" fill="#d8b898"/>
<path d="M122 55 C120 42 142 38 145 52 Z" fill="#f2b424"/><rect x="120" y="52" width="26" height="3" rx="1.5" fill="#e8a818"/>
<path d="M133 66 L135 72 L138 66 Z" fill="#e8eef8"/><path d="M134 70 L135 80 L137 70 Z" fill="#3050a0"/>
</g></svg></div><div class="nt">工程造价审核的要点</div><div class="nd">2019.08.29</div><div class="nx">1、核准工程量。工程量是编制决算最基本的内容，也是整个工程取费和计税的基础。工程量一旦不准，就会导致整个工程造价不实。审核人员要在工程决算审核前进行认真地调查和实地勘察，摸清施工情况，熟悉施工图纸和变...</div></div>
</div>
<div class="pan" style="left:1346px;top:109px;width:548px;height:402px">
<div class="ph" style="height:37px;border-bottom:1px solid #e6e6e6"><div class="tt" style="left:15px;line-height:35px">我的日程</div><div class="btn" style="left:357px;width:74px">返回今天</div><div class="btn" style="left:439px;width:48px">上周</div><div class="btn" style="left:495px;width:48px">下周</div></div>
<div class="wk" style="left:15.0px;top:37px;height:41px;line-height:28px">日</div>
<div class="wk" style="left:90.43px;top:37px;height:41px;line-height:28px">一</div>
<div class="wk" style="left:165.86px;top:37px;height:41px;line-height:28px">二</div>
<div class="wk" style="left:241.29000000000002px;top:37px;height:41px;line-height:28px">三</div>
<div class="wk" style="left:316.72px;top:37px;height:41px;line-height:28px">四</div>
<div class="wk" style="left:392.15000000000003px;top:37px;height:41px;line-height:28px">五</div>
<div class="wk" style="left:467.58000000000004px;top:37px;height:41px;line-height:28px">六</div>
<div class="abs" style="left:0;top:78px;width:548px;height:1px;background:#ececec"></div>
<div class="wk" style="left:15.0px;top:81px;height:28px;line-height:28px">16</div>
<div class="wk" style="left:90.43px;top:81px;height:28px;line-height:28px">17</div>
<div class="abs" style="left:183px;top:83px;width:41px;height:26px;border:1px solid #f5a3a6;border-radius:6px;background:#fff6f6"></div>
<div class="wk" style="left:165.86px;top:83px;height:26px;line-height:26px">18</div>
<div class="wk" style="left:241.29000000000002px;top:81px;height:28px;line-height:28px">19</div>
<div class="wk" style="left:316.72px;top:81px;height:28px;line-height:28px">20</div>
<div class="wk" style="left:392.15000000000003px;top:81px;height:28px;line-height:28px">21</div>
<div class="wk" style="left:467.58000000000004px;top:81px;height:28px;line-height:28px">22</div>
<div class="abs" style="left:0;top:121px;width:548px;height:1px;background:#ececec"></div>
<div class="abs" style="left:13px;top:128px;line-height:20px;color:#4a6a90">2020-02-18日程</div>
<div class="abs" style="left:3px;top:153px;width:541px;height:1px;background:#ececec"></div>
<svg class="abs" style="left:519px;top:164px" width="12" height="12" viewBox="0 0 12 12"><path d="M1 1 L11 11 M11 1 L1 11" stroke="#5b9ad8" stroke-width="1.3"/></svg>
</div>
<div class="pan" style="left:230px;top:521px;width:548px;height:402px">
<div class="ph"><div class="tt">我的申请</div><svg class="more" width="38" height="13" viewBox="0 0 38 13" style="border:none;background:none"><rect x="0.5" y="0.5" width="37" height="12" rx="3" fill="#fff" stroke="#e6e6e6"/><g transform="translate(5,4)" stroke="#f25a0a" stroke-width="1.15" fill="none"><path d="M0.5 5.2 V1.2 Q0.5 0.5 1.2 0.5 H4.3 Q5 0.5 5 1.2 V5.2 M2.75 0.5 V5.2"/><rect x="6.6" y="0.5" width="4.3" height="4.4" rx="0.6"/><path d="M12.5 5.2 V0.5 H16.4 V2.6 H12.5 M15.2 2.6 L16.6 5.2"/><path d="M22.8 0.5 H18.3 V4.9 H22.8 M18.3 2.7 H22"/></g><path d="M31 4 L34.2 6.6 L31 9.2 Z" fill="#f25a0a"/></svg></div>
<div class="row" style="top:45px"><i></i><span class="t">费用报销_潼南区2019年绿化补贴项目-施工2标段_张鑫_2020-...</span><span class="d">2020.01.03</span></div>
<div class="row" style="top:80px"><i></i><span class="t">费用报销_潼南区2019年绿化补贴项目-施工2标段_张鑫_2020-...</span><span class="d">2020.01.03</span></div>
<div class="row" style="top:115px"><i></i><span class="t">施工日志_张鑫_重庆太极制药有限公司亳州中药材仓储物流基...</span><span class="d">2020.01.02</span></div>
<div class="row" style="top:150px"><i></i><span class="t">张鑫_用品领用申请_账簿_财务用品_领导审批_肖晴,_运行中</span><span class="d">2020.01.02</span></div>
<div class="row" style="top:185px"><i></i><span class="t">质量整改_张鑫_华润12城房建工程项目_2021-02-02_领导审批...</span><span class="d">2020.01.02</span></div>
<div class="row" style="top:220px"><i></i><span class="t">技术交底_龙湖三千里小区_张鑫_2020-12-02_领导审批_宋浩...</span><span class="d">2020.01.02</span></div>
<div class="row" style="top:255px"><i></i><span class="t">进度款申报_万达广场35#会所及咖啡厅空调安装工程_万达广...</span><span class="d">2020.01.02</span></div>
<div class="row" style="top:290px"><i></i><span class="t">张永银_2020-08-26_湖南洞庭湖水库引水工程施工I标_部门经...</span><span class="d">2020.01.02</span></div>
<div class="row" style="top:325px"><i></i><span class="t">进度款申报_华软大厦研究基地中央空调系统工程_华软大厦研...</span><span class="d">2020.01.02</span></div>
<div class="row" style="top:360px"><i></i><span class="t">黄敏_2020-05-22_江苏成品油二期项目一标段工程_部门经理...</span><span class="d">2020.01.02</span></div>
</div>
<div class="pan" style="left:788px;top:521px;width:548px;height:402px">
<div class="ph"><div class="tt">我的待办</div><svg class="more" width="38" height="13" viewBox="0 0 38 13" style="border:none;background:none"><rect x="0.5" y="0.5" width="37" height="12" rx="3" fill="#fff" stroke="#e6e6e6"/><g transform="translate(5,4)" stroke="#f25a0a" stroke-width="1.15" fill="none"><path d="M0.5 5.2 V1.2 Q0.5 0.5 1.2 0.5 H4.3 Q5 0.5 5 1.2 V5.2 M2.75 0.5 V5.2"/><rect x="6.6" y="0.5" width="4.3" height="4.4" rx="0.6"/><path d="M12.5 5.2 V0.5 H16.4 V2.6 H12.5 M15.2 2.6 L16.6 5.2"/><path d="M22.8 0.5 H18.3 V4.9 H22.8 M18.3 2.7 H22"/></g><path d="M31 4 L34.2 6.6 L31 9.2 Z" fill="#f25a0a"/></svg></div>
<div class="row" style="top:45px"><i></i><span class="t">进度款申报_华软办公楼增加视频监控项目_华软办公楼增加视频...</span><span class="d" style="font-size:13px">2020-01-02 12:06</span></div>
<div class="row" style="top:80px"><i></i><span class="t">投标文件审查_胡广生_华软大厦研究基地中央空调系统工程_20...</span><span class="d" style="font-size:13px">2020-01-02 12:05</span></div>
<div class="row" style="top:115px"><i></i><span class="t">进度款申报_江苏成品油二期项目一标段工程_江苏成品油二期项...</span><span class="d" style="font-size:13px">2020-01-02 12:05</span></div>
<div class="row" style="top:150px"><i></i><span class="t">劳务付款申请_西安成都路龙湖上河城项目_何芷茵_西安成都路...</span><span class="d" style="font-size:13px">2020-01-02 12:04</span></div>
<div class="row" style="top:185px"><i></i><span class="t">进度款申报_晟铭园林绿化工程_晟铭园林绿化工程_陈菲_陈菲</span><span class="d" style="font-size:13px">2020-01-02 12:03</span></div>
<div class="row" style="top:220px"><i></i><span class="t">进度款申报_上海市美容医院ICU手术室净化工程_上海市美容医...</span><span class="d" style="font-size:13px">2020-01-02 12:02</span></div>
<div class="row" style="top:255px"><i></i><span class="t">劳务付款申请_上海市美容医院ICU手术室净化工程_李若若_上...</span><span class="d" style="font-size:13px">2020-01-02 12:02</span></div>
<div class="row" style="top:290px"><i></i><span class="t">完工结算_西安成都路龙湖上河城项目_西安成都路龙湖上河城项...</span><span class="d" style="font-size:13px">2020-01-02 12:02</span></div>
<div class="row" style="top:325px"><i></i><span class="t">进度款申报_广安邓小平纪念馆安全防范系统维护保养项目_广安...</span><span class="d" style="font-size:13px">2020-01-02 12:02</span></div>
<div class="row" style="top:360px"><i></i><span class="t">完工结算_龙湖天街城1区设计采购施工（EPC）总承包工程_龙...</span><span class="d" style="font-size:13px">2020-01-02 12:00</span></div>
</div>
<div class="pan" style="left:1346px;top:521px;width:548px;height:402px">
<div class="ph"><div class="tt">我的已办</div><svg class="more" width="38" height="13" viewBox="0 0 38 13" style="border:none;background:none"><rect x="0.5" y="0.5" width="37" height="12" rx="3" fill="#fff" stroke="#e6e6e6"/><g transform="translate(5,4)" stroke="#f25a0a" stroke-width="1.15" fill="none"><path d="M0.5 5.2 V1.2 Q0.5 0.5 1.2 0.5 H4.3 Q5 0.5 5 1.2 V5.2 M2.75 0.5 V5.2"/><rect x="6.6" y="0.5" width="4.3" height="4.4" rx="0.6"/><path d="M12.5 5.2 V0.5 H16.4 V2.6 H12.5 M15.2 2.6 L16.6 5.2"/><path d="M22.8 0.5 H18.3 V4.9 H22.8 M18.3 2.7 H22"/></g><path d="M31 4 L34.2 6.6 L31 9.2 Z" fill="#f25a0a"/></svg></div>
<div class="row" style="top:45px"><i></i><span class="t">费用报销_潼南区2019年绿化补贴项目-施工2标段_张鑫_2020-...</span><span class="d">2020.01.03</span></div>
<div class="row" style="top:80px"><i></i><span class="t">费用报销_潼南区2019年绿化补贴项目-施工2标段_张鑫_2020-...</span><span class="d">2020.01.03</span></div>
<div class="row" style="top:115px"><i></i><span class="t">施工日志_张鑫_重庆太极制药有限公司亳州中药材仓储物流基...</span><span class="d">2020.01.02</span></div>
<div class="row" style="top:150px"><i></i><span class="t">张鑫_用品领用申请_账簿_财务用品_领导审批_肖晴,</span><span class="d">2020.01.02</span></div>
<div class="row" style="top:185px"><i></i><span class="t">质量整改_张鑫_华润12城房建工程项目_2021-02-02_领导审批...</span><span class="d">2020.01.02</span></div>
<div class="row" style="top:220px"><i></i><span class="t">技术交底_龙湖三千里小区_张鑫_2020-12-02_领导审批_宋浩然,</span><span class="d">2020.01.02</span></div>
<div class="row" style="top:255px"><i></i><span class="t">进度款申报_万达广场35#会所及咖啡厅空调安装工程_万达广...</span><span class="d">2020.01.02</span></div>
<div class="row" style="top:290px"><i></i><span class="t">张永银_2020-08-26_湖南洞庭湖水库引水工程施工I标_部门经...</span><span class="d">2020.01.02</span></div>
<div class="row" style="top:325px"><i></i><span class="t">进度款申报_华软大厦研究基地中央空调系统工程_华软大厦研...</span><span class="d">2020.01.02</span></div>
<div class="row" style="top:360px"><i></i><span class="t">黄敏_2020-05-22_江苏成品油二期项目一标段工程_部门经理...</span><span class="d">2020.01.02</span></div>
</div>
<svg class="abs" style="left:1766px;top:876px;opacity:.55" width="128" height="40" viewBox="0 0 128 40">
<path d="M8 3 L20 3 C16 6 14 9 14 12 L10 24 L3 13 Z" fill="#4a5a80"/>
<path d="M15 12 C16 7 20 5 24 5 C27 7 29 9 30 12 C26 14 20 16 16 20 Z" fill="#e08a60"/>
<path d="M15 25 C19 20 24 17 30 15 L24 25 Z" fill="#4a5a80"/>
<text x="30" y="22" font-family="Liberation Sans, sans-serif" font-size="21" font-weight="bold" fill="#5a6a90" textLength="92" lengthAdjust="spacingAndGlyphs">泛普软件</text>
<text x="5" y="35" font-family="Liberation Serif, serif" font-size="11" fill="#c06050" textLength="118" lengthAdjust="spacingAndGlyphs">www.fanpusoft.com</text>
</svg>
</body></html>
